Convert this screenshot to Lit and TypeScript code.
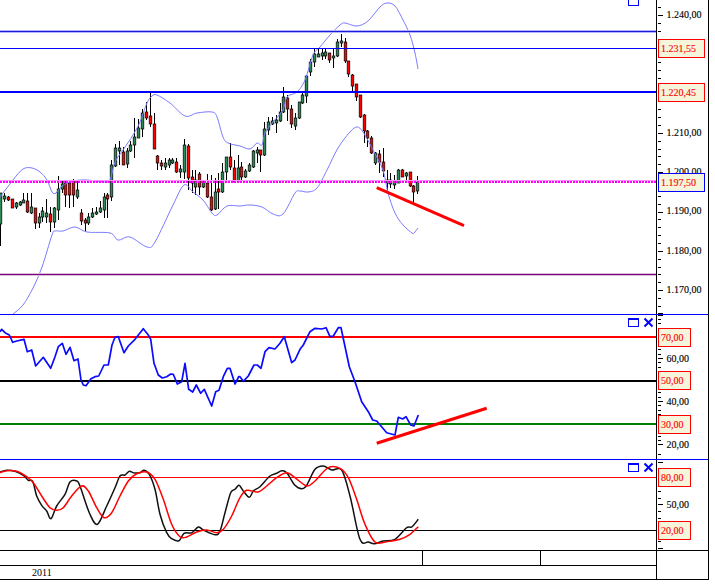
import { LitElement, html, css, svg } from "lit";
import { customElement } from "lit/decorators.js";

type Pt = [number, number];
type Candle = [number, number, number, number, number, "g" | "r"];

const CANDLES: Candle[] = [
  [0.5,193,246,193,224,"g"],[4,193,202,196,199,"g"],[8,196,201,197,200,"r"],[12,199,208,199,208,"r"],
  [16,202,209,203,207,"g"],[20,201,206,202,205,"g"],[23.5,193,203,200,203,"g"],[27.5,193,213,201,212,"r"],
  [31.5,193,214,207,213,"g"],[35.5,208,229,208,223,"r"],[39.5,213,228,217,223,"g"],[42.5,207,222,211,217,"g"],
  [46.5,199,223,213,217,"g"],[50.5,207,232,214,222,"r"],[54.5,207,228,208,222,"g"],[58.5,176,220,189,210,"g"],
  [62.5,180,193,184,189,"g"],[65.5,180,207,183,195,"r"],[69.5,180,208,183,195,"r"],[73.5,179,207,181,195,"r"],
  [77.5,180,199,190,197,"g"],[81.5,209,225,213,221,"r"],[85.5,218,232,220,223,"r"],[88.5,213,225,217,223,"g"],
  [92.5,208,218,213,217,"g"],[96.5,207,215,212,214,"g"],[100.5,201,213,208,212,"g"],[104.5,193,218,197,210,"g"],
  [107.5,193,218,195,199,"r"],[111.5,160,201,165,197,"g"],[115.5,144,167,148,166,"g"],[119,141,165,148,151,"g"],
  [123,147,165,152,165,"r"],[127,148,168,151,164,"g"],[130.5,141,152,145,151,"g"],[134.5,118,158,137,145,"g"],
  [138.5,119,137,128,138,"g"],[142.5,109,137,113,129,"g"],[146.5,102,120,112,118,"r"],[150.5,93,127,116,124,"r"],
  [154,113,149,124,149,"r"],[157.5,155,170,156,163,"r"],[161.5,160,170,163,166,"r"],[165.5,158,170,163,167,"g"],
  [169.5,158,168,160,165,"g"],[172.5,158,164,160,163,"g"],[176.5,158,173,162,172,"r"],[180.5,165,178,169,172,"g"],
  [184.5,139,179,145,172,"g"],[188.5,144,190,146,178,"r"],[192.5,170,193,177,183,"r"],[195.5,170,195,180,187,"g"],
  [199.5,172,195,174,187,"r"],[203.5,180,188,182,187,"g"],[207.5,174,198,183,197,"r"],[211.5,175,211,197,210,"r"],
  [215.5,178,210,192,209,"g"],[218.5,173,209,189,192,"r"],[222.5,163,193,172,192,"g"],[226.5,157,180,157,172,"g"],
  [230.5,143,170,157,167,"r"],[234.5,160,182,168,182,"r"],[238,155,182,168,181,"g"],[241.5,162,180,167,177,"r"],
  [245,169,178,171,177,"g"],[249,163,172,165,171,"g"],[253.5,150,168,151,167,"g"],[257.5,147,163,150,153,"g"],
  [260.5,150,172,150,155,"r"],[264.5,122,156,129,155,"g"],[268.5,117,135,122,130,"g"],[272.5,117,125,121,124,"g"],
  [276.5,115,133,120,123,"g"],[280.5,103,122,112,121,"g"],[283.5,87,113,97,112,"g"],[287.5,95,121,98,109,"r"],
  [291.5,105,128,109,124,"r"],[295.5,113,130,118,126,"g"],[299.5,102,119,102,118,"g"],[302.5,93,104,95,103,"g"],
  [306.5,75,103,76,96,"g"],[310.5,59,76,62,72,"g"],[314.5,49,67,54,62,"g"],[318.5,48,57,54,57,"g"],
  [322.5,49,60,53,56,"g"],[325.5,48,59,52,56,"g"],[329.5,53,63,53,60,"r"],[333.5,49,68,56,58,"g"],
  [337.5,39,57,42,56,"g"],[341.5,34,47,41,43,"g"],[345.5,38,63,42,61,"r"],[348.5,61,77,61,74,"r"],
  [352.5,74,91,75,86,"r"],[356.5,84,101,84,97,"r"],[360.5,95,118,95,117,"r"],[364.5,114,143,115,131,"r"],
  [367.5,130,147,131,138,"r"],[371.5,136,154,138,153,"r"],[375.5,152,165,153,163,"g"],[379.5,150,173,154,162,"r"],
  [383.5,148,177,162,171,"r"],[387.5,170,190,180,183,"g"],[390.5,173,188,180,184,"g"],[394.5,175,189,181,185,"g"],
  [398.5,169,183,170,183,"g"],[402.5,169,177,170,177,"r"],[406.5,172,183,173,176,"g"],[410.5,172,187,172,186,"r"],
  [413.5,185,203,186,192,"r"],[417.5,176,194,182,191,"g"],
];

const UPPER: Pt[] = [[0,197],[13,180],[23,169],[32,168],[40,172],[47,180],[52,192],[56,193],[62,186],[73,181],[87,180],[107,182],[111,177],[115,162],[123,150],[133,135],[140,122],[147,103],[152,96],[157,95],[170,103],[185,116],[197,113],[212,112],[217,117],[223,137],[228,143],[240,146],[250,149],[257,143],[262,145],[265,133],[273,122],[283,110],[287,97],[297,92],[305,80],[313,55],[320,47],[330,35],[340,25],[345,23],[357,26],[368,21],[380,7],[387,3],[395,6],[403,20],[410,35],[415,53],[418,69]];
const LOWER: Pt[] = [[13,314],[23,305],[33,288],[42,267],[52,235],[55,231],[63,231],[75,227],[87,232],[110,233],[118,240],[130,237],[147,247],[155,242],[173,205],[184,185],[193,192],[203,200],[212,213],[217,215],[227,206],[240,206],[250,205],[262,207],[273,214],[283,214],[295,193],[300,191],[308,192],[317,188],[327,170],[338,148],[350,132],[357,127],[363,132],[373,150],[383,170],[388,193],[395,213],[403,225],[412,233],[414,233],[418,228]];

const z = (pts: number[][], ox: number, oy: number): Pt[] => pts.map(([x, y]) => [ox + x / 3, oy + y / 3]);

const RSI: Pt[] = [
  ...z([[0,65],[5,58],[15,68],[28,75],[38,97],[50,93],[72,88],[82,125],[95,120],[107,168],[130,142],[152,175],[165,140],[175,110],[187,100],[198,133],[210,112],[222,152],[234,147],[243,210],[250,225],[258,227],[273,206],[285,200],[296,198],[312,165],[325,165],[336,105],[345,82],[355,80],[372,128],[385,108],[405,88],[430,56],[445,75],[452,88],[462,160],[475,195],[487,204],[500,200],[512,192],[520,193],[532,222],[545,215],[555,160],[566,238],[578,246],[589,225],[602,250],[613,238],[635,288],[647,245],[657,241],[670,200],[682,175],[690,175],[705,222],[716,200]], 0, 310),
  ...z([[0,200],[10,214],[25,198],[42,165],[52,165],[63,175],[75,125],[87,113],[105,117],[120,100],[133,80],[155,158],[165,150],[180,118],[190,105],[210,65],[225,55],[245,57],[258,53],[270,80],[280,78],[295,53],[303,53],[313,100],[328,170],[345,215],[365,275],[385,305],[398,330],[410,333],[440,368],[465,375],[475,322],[488,327],[498,320],[512,345],[522,348],[535,315]], 240, 310),
];
const STOCH_K: Pt[] = [
  ...z([[0,48],[20,43],[45,46],[70,58],[85,73],[98,76],[110,120],[125,148],[140,165],[153,188],[170,150],[195,115],[210,78],[230,75],[240,90],[268,170],[292,205],[320,150],[345,95],[360,60],[375,57],[388,46],[400,50],[420,50],[432,43],[448,55],[465,100],[480,175],[500,230],[515,248],[537,254],[552,232],[575,230],[595,213],[610,222],[645,236],[660,225],[675,170],[692,110],[705,100],[715,88]], 0, 456),
  ...z([[0,90],[10,105],[28,124],[40,105],[60,92],[90,60],[110,52],[125,44],[140,50],[165,88],[185,98],[200,88],[225,40],[250,30],[275,42],[305,42],[330,120],[360,250],[385,258],[403,263],[430,255],[465,250],[500,215],[515,213],[535,190]], 240, 456),
];
const STOCH_D: Pt[] = [
  ...z([[0,50],[20,44],[50,46],[80,62],[100,80],[125,120],[150,155],[170,163],[190,155],[215,120],[245,90],[265,105],[290,155],[312,185],[335,170],[360,120],[385,75],[410,53],[440,48],[465,70],[490,130],[515,205],[540,242],[560,243],[590,228],[620,222],[650,230],[670,220],[695,180]], 0, 456),
  ...z([[0,125],[20,103],[55,108],[80,90],[110,65],[140,50],[165,65],[200,90],[225,75],[265,35],[300,37],[325,65],[350,130],[375,205],[405,258],[440,257],[480,250],[510,235],[535,212]], 240, 456),
];

function smooth(p: Pt[]): string {
  let d = `M${p[0][0]} ${p[0][1]}`;
  for (let i = 0; i < p.length - 1; i++) {
    const a = p[Math.max(i - 1, 0)], b = p[i], c = p[i + 1], e = p[Math.min(i + 2, p.length - 1)];
    const c1x = b[0] + (c[0] - a[0]) / 6, c1y = b[1] + (c[1] - a[1]) / 6;
    const c2x = c[0] - (e[0] - b[0]) / 6, c2y = c[1] - (e[1] - b[1]) / 6;
    d += `C${c1x.toFixed(1)} ${c1y.toFixed(1)} ${c2x.toFixed(1)} ${c2y.toFixed(1)} ${c[0].toFixed(1)} ${c[1].toFixed(1)}`;
  }
  return d;
}
const poly = (p: Pt[]) => p.map(([x, y]) => `${x.toFixed(1)},${y.toFixed(1)}`).join(" ");

interface Tag { y: number; text: string; w: number; border?: string }
interface Plain { y: number; text: string }

function ticks(ys: number[], majors: number[]) {
  return ys.map((y) => {
    const m = majors.some((v) => Math.abs(v - y) < 0.6);
    const r = Math.round(y);
    return svg`<rect class="tick" x="657" y=${r} width=${m ? 5 : 3} height="1"></rect>`;
  });
}
function scale(top: number, h: number, tickYs: number[], majors: number[], plain: Plain[], tags: Tag[]) {
  return html`<svg class="scale" viewBox="656 ${top} 51 ${h}" width="51" height=${h}>
    ${ticks(tickYs, majors)}
    ${plain.map((p) => svg`<text class="num" x="665.5" y=${p.y + 3.5}>${p.text}</text>`)}
    ${tags.map((t) => svg`
      <rect class="tag" x="657" y=${t.y - 9} width=${t.w} height="18" stroke=${t.border ?? "#f00"}></rect>
      <text class="tagtxt" x="660" y=${t.y + 3.5}>${t.text}</text>`)}
  </svg>`;
}
function range(from: number, to: number, step: number) {
  const out: number[] = [];
  for (let y = from; y <= to; y += step) out.push(y);
  return out;
}
function icons(y: number, close: boolean) {
  return svg`
    <path class="ico" d=${`M628.5 ${y + 0.5}h10v8h-10zM628.5 ${y + 1.5}h10`}></path>
    ${close ? svg`<path class="icox" d=${`M644.5 ${y + 0.5}l8 8M652.5 ${y + 0.5}l-8 8`}></path>` : null}`;
}

@customElement("app-root")
export class AppRoot extends LitElement {
  static styles = css`
    :host { display: block; width: 709px; font-family: "Liberation Serif", serif; background: #fff; }
    .frame { display: flex; flex-direction: column; width: 709px; border-right: 1px solid #000; border-bottom: 1px solid #000; box-sizing: border-box; height: 580px; }
    .panel { display: grid; grid-template-columns: 656px 52px; }
    .panel svg { display: block; }
    .main { height: 314px; border-bottom: 1px solid #00f; }
    .rsi { height: 144px; border-bottom: 1px solid #00f; }
    .sto { height: 90px; border-bottom: 1px solid #000; }
    .scalewrap { border-left: 1px solid #000; }
    .axis { display: flex; height: 15px; }
    .axis-cells { display: flex; width: 656px; border-bottom: 1px solid #000; }
    .cell { border-right: 1px solid #000; box-sizing: border-box; }
    .c1 { width: 423px; }
    .c2 { width: 118px; }
    .c3 { flex: 1; border-right: 0; }
    .axis-scale { flex: 1; border-left: 1px solid #000; }
    .foot { display: flex; height: 13px; }
    .year { width: 656px; padding-left: 32px; box-sizing: border-box; font-size: 10px; line-height: 14px; color: #000; }
    .foot-scale { flex: 1; border-left: 1px solid #000; }
    .tick { fill: #000; }
    .num { font-size: 10px; fill: #000; stroke: #000; stroke-width: 0.12; }
    .tag { fill: #f5f5dc; stroke-width: 1; shape-rendering: crispEdges; }
    .tagtxt { font-size: 10px; fill: #f00; stroke: #f00; stroke-width: 0.12; }
    .ico { fill: none; stroke: #00f; stroke-width: 1; shape-rendering: crispEdges; }
    .icox { fill: none; stroke: #00f; stroke-width: 2; }
    .band { fill: none; stroke: #7a7aff; stroke-width: 1; }
    .rsi-line { fill: none; stroke: #0a0aff; stroke-width: 1.7; stroke-linejoin: round; }
    .k { fill: none; stroke: #111; stroke-width: 1.5; }
    .d { fill: none; stroke: #f00; stroke-width: 1.5; }
    .trend { stroke: #f00; stroke-width: 3; }
    .wick { fill: #000; }
    .bg { fill: #2e8b57; stroke: #000; stroke-width: 0.7; }
    .br { fill: #f00; stroke: #000; stroke-width: 0.7; }
    .h { shape-rendering: crispEdges; }
  `;

  private hline(y: number, h: number, color: string) {
    return svg`<rect class="h" x="0" y=${y} width="656" height=${h} fill=${color}></rect>`;
  }

  private candles() {
    return CANDLES.map(([x, wt, wb, bt, bb, c]) => {
      const px = Math.floor(x);
      return svg`
        <rect class="wick" x=${px} y=${wt} width="1" height=${wb - wt}></rect>
        <rect class=${c === "g" ? "bg" : "br"} x=${px - 0.8} y=${bt} width="2.6" height=${Math.max(bb - bt, 1)}></rect>`;
    });
  }

  render() {
    const mainY = (k: number) => 15 + 7.86 * k;
    const mainTicks = range(-1, 38, 1).map(mainY).filter((y) => y > 0 && y < 314);
    const mainMajors = [15, 133, 172, 211, 250.6, 290];
    const rsiTicks = range(0, 33, 1).map((k) => 444.3 - 4.32 * k).filter((y) => y > 315).concat([315, 454]);
    const stoTicks = [462, 468, 475, 491, 498, 504.3, 511, 518, 525, 541, 547.7];
    return html`
      <div class="frame">
        <div class="panel main">
          <svg viewBox="0 0 656 314" width="656" height="314">
            ${this.candles()}
            <path class="band" d=${smooth(UPPER)}></path>
            <path class="band" d=${smooth(LOWER)}></path>
            ${this.hline(30, 3, "#b4b4ff")}
            ${this.hline(31, 1, "#1c1cd8")}
            ${this.hline(48, 1, "#00f")}
            ${this.hline(91, 2, "#00f")}
            ${this.hline(180, 1, "#ff90ff")}
            <line x1="0" x2="656" y1="182" y2="182" stroke="#f0f" stroke-width="2" stroke-dasharray="2 1" class="h"></line>
            ${this.hline(273, 3, "#d8c0d8")}
            ${this.hline(274, 1, "#800080")}
            <line class="trend" x1="376.7" y1="187.7" x2="464" y2="225.7"></line>
            ${icons(-3.5, false)}
          </svg>
          <div class="scalewrap">
            ${scale(0, 314, mainTicks.concat([313]), mainMajors.concat([313]),
              [
                { y: 14.3, text: "1.240,00" },
                { y: 132.7, text: "1.210,00" },
                { y: 171.5, text: "1.200,00" },
                { y: 210.7, text: "1.190,00" },
                { y: 250.5, text: "1.180,00" },
                { y: 289.5, text: "1.170,00" },
              ],
              [
                { y: 48, text: "1.231,55", w: 46 },
                { y: 92, text: "1.220,45", w: 46 },
                { y: 182, text: "1.197,50", w: 46, border: "#00f" },
              ])}
          </div>
        </div>

        <div class="panel rsi">
          <svg viewBox="0 315 656 144" width="656" height="144">
            ${this.hline(336, 2, "#f00")}
            ${this.hline(380, 2, "#000")}
            ${this.hline(423, 2, "#008000")}
            <polyline class="rsi-line" points=${poly(RSI)}></polyline>
            <line class="trend" x1="376.7" y1="443.3" x2="486.7" y2="408.3"></line>
            ${icons(318, true)}
          </svg>
          <div class="scalewrap">
            ${scale(315, 144, rsiTicks, [358.3, 401.6, 444.3, 315],
              [
                { y: 358, text: "60,00" },
                { y: 401.5, text: "40,00" },
                { y: 444, text: "20,00" },
              ],
              [
                { y: 337, text: "70,00", w: 32 },
                { y: 380.5, text: "50,00", w: 32 },
                { y: 424, text: "30,00", w: 32 },
              ])}
          </div>
        </div>

        <div class="panel sto">
          <svg viewBox="0 460 656 90" width="656" height="90">
            ${this.hline(477, 1, "#f00")}
            ${this.hline(530, 1, "#000")}
            <path class="k" d=${smooth(STOCH_K)}></path>
            <path class="d" d=${smooth(STOCH_D)}></path>
            ${icons(463, true)}
          </svg>
          <div class="scalewrap">
            ${scale(460, 90, stoTicks, [461, 504.3, 547.7, 462], [{ y: 504, text: "50,00" }],
              [
                { y: 477, text: "80,00", w: 32 },
                { y: 530, text: "20,00", w: 32 },
              ])}
          </div>
        </div>

        <div class="axis">
          <div class="axis-cells">
            <div class="cell c1"></div>
            <div class="cell c2"></div>
            <div class="cell c3"></div>
          </div>
          <div class="axis-scale"></div>
        </div>
        <div class="foot">
          <div class="year">2011</div>
          <div class="foot-scale"></div>
        </div>
      </div>
    `;
  }
}
